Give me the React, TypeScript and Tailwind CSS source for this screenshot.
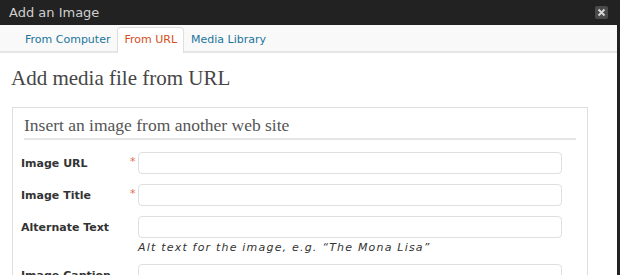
import React from "react";

const sans = { fontFamily: '"DejaVu Sans", "Liberation Sans", sans-serif' };
const serif = { fontFamily: '"Liberation Serif", "DejaVu Serif", serif' };

interface FieldProps {
  label: string;
  required?: boolean;
  hint?: string;
}

function Field({ label, required, hint }: FieldProps) {
  return (
    <div className="flex items-start">
      <div className="w-[109px] pt-[4px] text-[11px] font-bold text-[#333]">{label}</div>
      <div className="w-[8px] pt-[2px] text-[11px] text-[#e4704e]">{required ? "*" : ""}</div>
      <div className="flex flex-col">
        <div className="h-[22px] w-[424px] rounded-[4px] border border-[#dfdfdf] bg-white" />
        {hint && (
          <div className="mt-[3px] text-[11px] leading-[13px] tracking-[1.2px] italic text-[#333]">{hint}</div>
        )}
      </div>
    </div>
  );
}

export default function App() {
  return (
    <div className="flex h-[275px] w-[620px] overflow-hidden bg-[#222]" style={sans}>
      <div className="flex w-[617px] flex-col">
        <div className="flex h-[25px] shrink-0 items-center justify-between px-[9px]">
          <span className="text-[13px] text-[#cfcfcf]">Add an Image</span>
          <div className="flex h-[13px] w-[13px] items-center justify-center rounded-[2px] bg-[#4a4a4a]">
            <svg width="9" height="9" viewBox="0 0 9 9">
              <path d="M1.5 1.5 L7.5 7.5 M7.5 1.5 L1.5 7.5" stroke="#d8d8d8" strokeWidth="1.8" />
            </svg>
          </div>
        </div>
        <div className="flex h-[28px] shrink-0 items-end border-b-2 border-[#e6e6e6] bg-[#f9f9f9] pl-[18px] text-[11px]">
          <div className="px-[7px] pb-[3px] text-[#21759b]">From Computer</div>
          <div className="-mb-[2px] rounded-t-[4px] border border-b-0 border-[#dfdfdf] bg-white px-[6px] pt-[4px] pb-[5px] text-[#d54e21]">
            From URL
          </div>
          <div className="px-[7px] pb-[3px] text-[#21759b]">Media Library</div>
        </div>
        <div className="flex-1 bg-white px-[11px] pt-[12px]">
          <h2 className="text-[21px] leading-[26px] text-[#464646]" style={serif}>
            Add media file from URL
          </h2>
          <div className="mt-[16px] ml-[1px] w-[576px] border border-[#dfdfdf] pr-[11px] pl-[8px] pt-[6px]">
            <div className="ml-[3px] border-b-2 border-[#e5e5e5] pb-[2px] text-[17.5px] leading-[22px] text-[#555]" style={serif}>
              Insert an image from another web site
            </div>
            <div className="mt-[12px] flex flex-col gap-[10px]">
              <Field label="Image URL" required />
              <Field label="Image Title" required />
              <Field label="Alternate Text" hint="Alt text for the image, e.g. “The Mona Lisa”" />
              <Field label="Image Caption" />
            </div>
          </div>
        </div>
      </div>
    </div>
  );
}
